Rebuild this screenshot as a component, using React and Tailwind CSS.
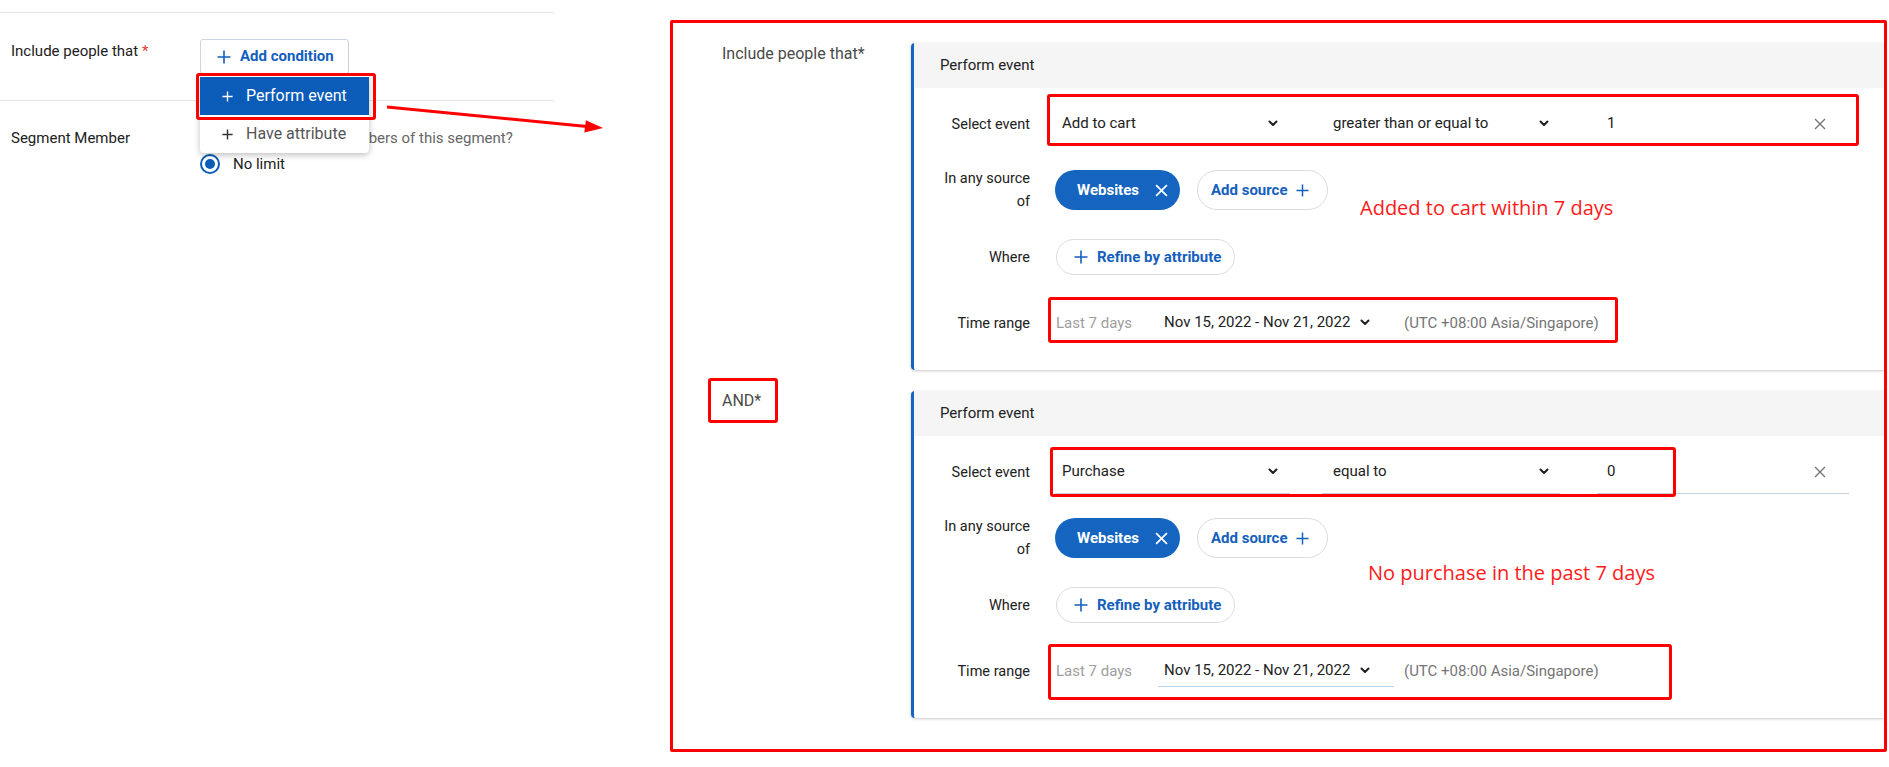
import React from "react";

const Chevron = () => (
  <svg width="10" height="7" viewBox="0 0 10 7" className="shrink-0">
    <polyline
      points="1.5,1.5 5,5 8.5,1.5"
      fill="none"
      stroke="#1f1f1f"
      strokeWidth="2"
      strokeLinecap="round"
      strokeLinejoin="round"
    />
  </svg>
);

const PlusIcon = ({ size = 14, color = "#1560bd", w = 1.6 }) => (
  <svg width={size} height={size} viewBox="0 0 14 14" className="shrink-0">
    <path d="M7 0.5v13M0.5 7h13" stroke={color} strokeWidth={w} fill="none" />
  </svg>
);

const Cross = ({ size = 12, color = "#757575", w = 1.4 }) => (
  <svg width={size} height={size} viewBox="0 0 12 12" className="shrink-0">
    <path d="M1 1l10 10M11 1L1 11" stroke={color} strokeWidth={w} fill="none" />
  </svg>
);

const RedBox = ({ className }) => (
  <div
    className={
      "absolute border-[3px] border-[#ff0000] rounded-[3px] pointer-events-none " +
      className
    }
  />
);

const RowLabel = ({ children }) => (
  <div className="w-[116px] shrink-0 text-right text-[14.5px] leading-[23px] text-[#212121]">
    {children}
  </div>
);

const EventCard = ({
  event,
  op,
  value,
  underline,
  dateLine,
  selectBox,
  timeBox,
  note,
  noteClass,
}) => (
  <div className="flex-1 bg-white border-l-[3px] border-[#1565c0] rounded-l-[4px] shadow-[0_1px_3px_rgba(0,0,0,0.22)]">
    <div className="h-[45px] bg-[#f5f5f5] pl-[26px] flex items-center text-[15px] text-[#212121]">
      Perform event
    </div>
    <div className="pt-[14px] pb-[31px]">
      {/* select event */}
      <div className="flex items-center h-[44px]">
        <RowLabel>Select event</RowLabel>
        <div className="relative ml-[25px] flex items-center h-full text-[15px] text-[#212121]">
          <div
            className={
              "w-[235px] h-full flex items-center justify-between pl-[7px] pr-[12px] border-b " +
              underline
            }
          >
            <span>{event}</span>
            <Chevron />
          </div>
          <div
            className={
              "ml-[32px] w-[238px] h-full flex items-center justify-between pl-[11px] pr-[11px] border-b " +
              underline
            }
          >
            <span>{op}</span>
            <Chevron />
          </div>
          <div
            className={
              "ml-[37px] w-[252px] h-full flex items-center justify-between pl-[10px] pr-[23px] border-b " +
              underline
            }
          >
            <span>{value}</span>
            <Cross />
          </div>
          <RedBox className={selectBox} />
        </div>
      </div>

      {/* source */}
      <div className="flex items-center h-[40px] mt-[24px]">
        <RowLabel>
          In any source
          <br />
          of
        </RowLabel>
        <div className="relative ml-[25px] flex items-center h-full">
          <div className="h-[40px] w-[125px] rounded-full bg-[#1565c0] flex items-center pl-[22px] gap-[16px] text-white text-[15px] font-bold">
            <span>Websites</span>
            <Cross color="#ffffff" size={13} w={1.6} />
          </div>
          <div className="ml-[17px] h-[40px] w-[131px] rounded-full border border-[#dcdcdc] flex items-center pl-[13px] gap-[8px] text-[#1560bd] text-[15px] font-bold">
            <span>Add source</span>
            <PlusIcon size={13} />
          </div>
          <div
            className={
              "absolute whitespace-nowrap text-[20px] leading-[24px] text-[#ff1a1a] " +
              noteClass
            }
            style={{ fontFamily: '"Open Sans", "Noto Sans", sans-serif' }}
          >
            {note}
          </div>
        </div>
      </div>

      {/* where */}
      <div className="flex items-center h-[36px] mt-[29px]">
        <RowLabel>Where</RowLabel>
        <div className="ml-[26px] h-[36px] w-[179px] rounded-full border border-[#dcdcdc] flex items-center pl-[17px] gap-[9px] text-[#1560bd] text-[15px] font-bold">
          <PlusIcon size={14} />
          <span>Refine by attribute</span>
        </div>
      </div>

      {/* time range */}
      <div className="flex items-center h-[32px] mt-[32px]">
        <RowLabel>Time range</RowLabel>
        <div className="relative ml-[26px] flex items-center h-full text-[15px]">
          <div className="w-[102px] text-[#9e9e9e]">Last 7 days</div>
          <div
            className={
              "w-[236px] h-full flex items-center pl-[6px] gap-[10px] border-b text-[#212121] " +
              dateLine
            }
          >
            <span>Nov 15, 2022 - Nov 21, 2022</span>
            <Chevron />
          </div>
          <div className="ml-[10px] text-[#757575]">(UTC +08:00 Asia/Singapore)</div>
          <RedBox className={timeBox} />
        </div>
      </div>
    </div>
  </div>
);

export default function App() {
  return (
    <div
      className="relative w-[1889px] h-[767px] bg-white overflow-hidden flex"
      style={{ fontFamily: 'Roboto, "Liberation Sans", sans-serif' }}
    >
      {/* left panel */}
      <div className="w-[670px] shrink-0 relative">
        <div className="mt-[12px] w-[554px] border-t border-[#e4e4e4]" />
        <div className="flex h-[88px] w-[554px] border-b border-[#e4e4e4]">
          <div className="w-[200px] pl-[11px] pt-[28px] text-[15px] leading-[20px] text-[#212121]">
            Include people that <span className="text-[#e53935]">*</span>
          </div>
          <div className="mt-[26px] h-[35px] w-[149px] border border-[#c9d5e3] rounded-[3px] flex items-center pl-[16px] gap-[9px] text-[#1560bd] font-bold text-[15px]">
            <PlusIcon size={14} />
            <span>Add condition</span>
          </div>
        </div>
        <div className="flex">
          <div className="w-[200px] pl-[11px] pt-[27px] text-[15px] leading-[20px] text-[#212121]">
            Segment Member
          </div>
          <div className="pt-[27px]">
            <div className="text-[15px] leading-[20px] text-[#666666]">
              Limit the number of members of this segment?
            </div>
            <div className="mt-[5px] flex items-center gap-[13px] text-[15px] text-[#212121]">
              <div className="w-[20px] h-[20px] rounded-full border-2 border-[#0b5cb8] flex items-center justify-center">
                <div className="w-[10px] h-[10px] rounded-full bg-[#0b5cb8]" />
              </div>
              <span>No limit</span>
            </div>
          </div>
        </div>

        {/* dropdown menu */}
        <div className="absolute left-[200px] top-[75px] w-[169px] bg-white rounded-b-[4px] shadow-[0_2px_6px_rgba(0,0,0,0.25)] z-10 pt-[2px]">
          <div className="h-[38px] bg-[#0b5cb8] flex items-center pl-[22px] gap-[13px] text-white text-[16px]">
            <PlusIcon size={11} color="#ffffff" w={1.8} />
            <span>Perform event</span>
          </div>
          <div className="h-[38px] flex items-center pl-[22px] gap-[13px] text-[#555555] text-[16px]">
            <PlusIcon size={11} color="#333333" w={1.8} />
            <span>Have attribute</span>
          </div>
        </div>
        <div className="absolute left-[196px] top-[73px] w-[180px] h-[47px] border-[3px] border-[#ff0000] rounded-[3px] z-20" />
      </div>

      {/* right annotated panel */}
      <div className="mt-[20px] w-[1217px] h-[732px] border-[3px] border-[#ff0000] rounded-[2px] pt-[20px] flex flex-col">
        <div className="flex">
          <div className="w-[238px] shrink-0 pl-[49px] pt-[1px] text-[16px] leading-[20px] text-[#4a4a4a]">
            Include people that*
          </div>
          <EventCard
            event="Add to cart"
            op="greater than or equal to"
            value="1"
            underline="border-transparent"
            dateLine="border-transparent"
            selectBox="-left-[8px] -top-[8px] w-[812px] h-[52px]"
            timeBox="-left-[8px] -top-[10px] w-[570px] h-[46px]"
            note="Added to cart within 7 days"
            noteClass="left-[305px] top-[26px]"
          />
        </div>
        <div className="flex mt-[21px]">
          <div className="w-[238px] shrink-0 pl-[35px]">
            <div className="relative -mt-[13px] w-[70px] h-[45px] flex items-center pl-[14px] text-[16px] text-[#4a4a4a]">
              AND*
              <RedBox className="inset-0" />
            </div>
          </div>
          <EventCard
            event="Purchase"
            op="equal to"
            value="0"
            underline="border-[#c6d1de]"
            dateLine="border-[#bcd3ee]"
            selectBox="-left-[5px] -top-[3px] w-[626px] h-[50px]"
            timeBox="-left-[8px] -top-[11px] w-[624px] h-[56px]"
            note="No purchase in the past 7 days"
            noteClass="left-[313px] top-[43px]"
          />
        </div>
      </div>

      {/* annotation arrow */}
      <svg
        className="absolute left-0 top-0 pointer-events-none z-30"
        width="1889"
        height="767"
        viewBox="0 0 1889 767"
      >
        <line x1="387" y1="107" x2="587" y2="126.4" stroke="#ff0000" strokeWidth="3" />
        <polygon points="603,128 584.3,132.4 585.9,120.2" fill="#ff0000" />
      </svg>
    </div>
  );
}
